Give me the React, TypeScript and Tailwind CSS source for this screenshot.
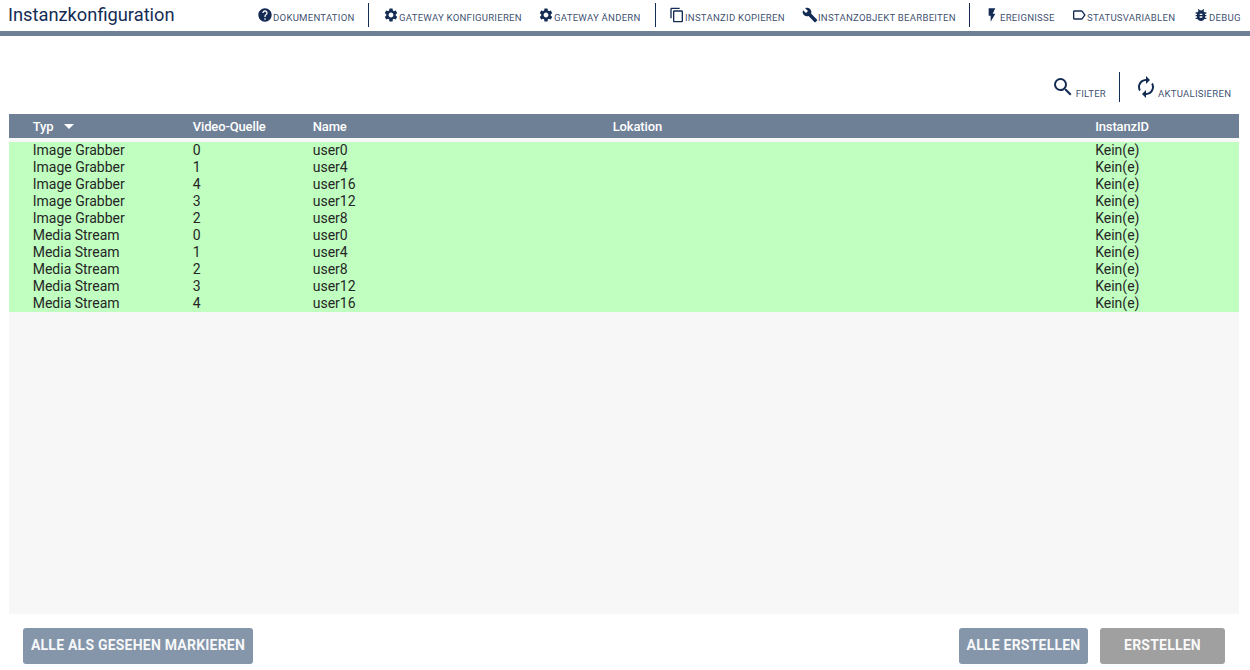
import type { ReactNode } from 'react';
import type { IconType } from 'react-icons';
import {
  MdArrowDropDown,
  MdAutorenew,
  MdBugReport,
  MdBuild,
  MdContentCopy,
  MdFlashOn,
  MdHelp,
  MdLabelOutline,
  MdSearch,
  MdSettings,
} from 'react-icons/md';

const rows = [
  ['Image Grabber', '0', 'user0'],
  ['Image Grabber', '1', 'user4'],
  ['Image Grabber', '4', 'user16'],
  ['Image Grabber', '3', 'user12'],
  ['Image Grabber', '2', 'user8'],
  ['Media Stream', '0', 'user0'],
  ['Media Stream', '1', 'user4'],
  ['Media Stream', '2', 'user8'],
  ['Media Stream', '3', 'user12'],
  ['Media Stream', '4', 'user16'],
];

const columns = 'grid grid-cols-[160px_120px_300px_482.5px_1fr] pl-[23.7px]';

function Tool({ icon: Icon, label, width }: { icon: IconType; label: string; width: string }) {
  return (
    <button className={`flex h-4 shrink-0 items-center whitespace-nowrap text-[9.6px] tracking-[0.24px] ${width}`}>
      <Icon className="size-4 shrink-0" />
      <span className="pt-[5px] leading-3 text-[#142c54]/85">{label}</span>
    </button>
  );
}

function Separator({ className }: { className: string }) {
  return <div className={`w-px shrink-0 bg-[#142c54] ${className}`} />;
}

function Action({ className, children }: { className: string; children: ReactNode }) {
  return (
    <button
      className={`h-9 whitespace-nowrap rounded-[3px] pb-[3px] text-center text-sm font-bold tracking-[0.22px] text-white/95 ${className}`}
    >
      {children}
    </button>
  );
}

export default function App() {
  return (
    <div className="flex h-[670px] w-[1250px] flex-col overflow-hidden bg-white font-['Roboto',sans-serif] text-[#142c54]">
      <header className="flex h-9 shrink-0 items-start border-b-[5px] border-[#6e8096]">
        <h1 className="w-[257px] shrink-0 pl-2 pt-[3px] text-[18.3px] leading-6">Instanzkonfiguration</h1>
        <div className="flex h-[30px] items-center">
          <Tool icon={MdHelp} label="DOKUMENTATION" width="w-[111px]" />
          <Separator className="mr-3.5 h-6" />
          <Tool icon={MdSettings} label="GATEWAY KONFIGURIEREN" width="w-[155px]" />
          <Tool icon={MdSettings} label="GATEWAY ÄNDERN" width="w-[117px]" />
          <Separator className="mr-[13px] h-6" />
          <Tool icon={MdContentCopy} label="INSTANZID KOPIEREN" width="w-[133px]" />
          <Tool icon={MdBuild} label="INSTANZOBJEKT BEARBEITEN" width="w-[167px]" />
          <Separator className="mr-3.5 h-6" />
          <Tool icon={MdFlashOn} label="EREIGNISSE" width="w-[87px]" />
          <Tool icon={MdLabelOutline} label="STATUSVARIABLEN" width="w-[122px]" />
          <Tool icon={MdBugReport} label="DEBUG" width="w-[50px]" />
        </div>
      </header>

      <div className="flex h-[78px] shrink-0 items-end justify-end pb-3 pr-[19px] text-[9.6px] tracking-[0.24px]">
        <button className="flex h-[30px] items-center">
          <MdSearch className="size-6" />
          <span className="pl-px pt-3.5 leading-3 text-[#142c54]/85">FILTER</span>
        </button>
        <Separator className="ml-[13px] mr-3.5 h-[30px]" />
        <button className="flex h-[30px] items-center">
          <MdAutorenew className="size-6" />
          <span className="w-[73px] whitespace-nowrap pt-3.5 leading-3 text-[#142c54]/85">AKTUALISIEREN</span>
        </button>
      </div>

      <main className="mx-[9px] mr-[11px] h-[500px] shrink-0 bg-[#f7f7f7]">
        <div className={`${columns} h-6 items-center bg-[#6e8096] text-[13px] font-medium tracking-[-0.13px] text-white`}>
          <span className="flex items-center">
            <span className="pt-0.5">Typ</span>
            <MdArrowDropDown className="ml-[3.6px] size-6" />
          </span>
          <span className="pt-0.5">Video-Quelle</span>
          <span className="pt-0.5">Name</span>
          <span className="pt-0.5">Lokation</span>
          <span className="pt-0.5">InstanzID</span>
        </div>
        <div className="mt-1 bg-[#c0ffc0] text-sm leading-[17px] text-[#262626]">
          {rows.map(([type, source, name]) => (
            <div key={type + source} className={`${columns} h-[17px]`}>
              <span>{type}</span>
              <span>{source}</span>
              <span>{name}</span>
              <span />
              <span>Kein(e)</span>
            </div>
          ))}
        </div>
      </main>

      <footer className="flex items-center pl-[23px] pr-[25px] pt-3.5">
        <Action className="mr-auto w-[230px] bg-[#8696aa]">ALLE ALS GESEHEN MARKIEREN</Action>
        <Action className="mr-3 w-[129px] bg-[#8696aa]">ALLE ERSTELLEN</Action>
        <Action className="w-[125px] bg-[#a0a0a0]">ERSTELLEN</Action>
      </footer>
    </div>
  );
}
